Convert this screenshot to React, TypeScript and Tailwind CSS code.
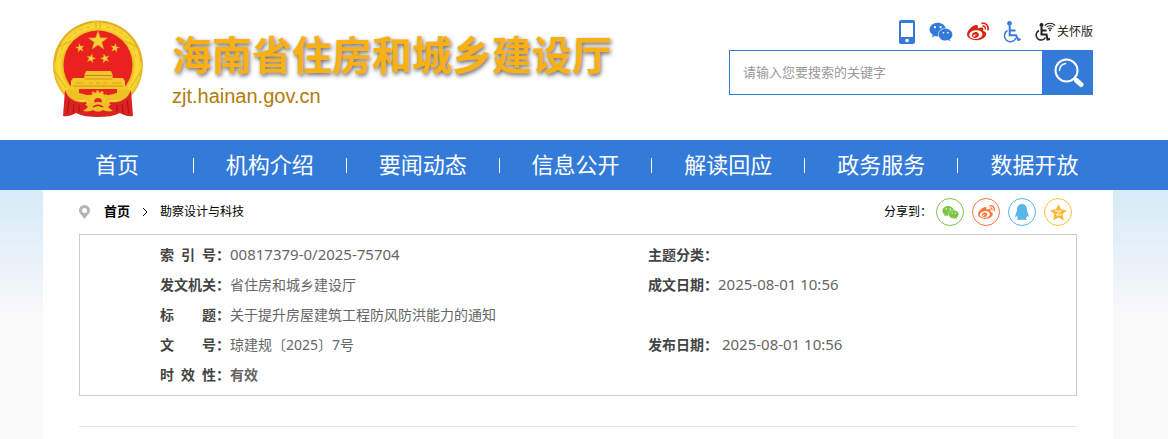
import React from "react";
import { FaWeixin, FaWeibo, FaQq } from "react-icons/fa";

const nav = ["首页", "机构介绍", "要闻动态", "信息公开", "解读回应", "政务服务", "数据开放"];

function Star({ x, y, r, a = 0 }: { x: number; y: number; r: number; a?: number }) {
  return (
    <path
      transform={`translate(${x} ${y}) rotate(${a}) scale(${r})`}
      d="M0-1 .235-.324.951-.309.38.124.588.809 0 .4-.588.809-.38.124-.951-.309-.235-.324Z"
      fill="#f6d03a"
      stroke="#e0901f"
      strokeWidth=".06"
    />
  );
}

function Emblem() {
  return (
    <svg className="h-[98px] w-[92px] shrink-0" viewBox="0 0 92 98" role="img" aria-label="国徽">
      <defs>
        <radialGradient id="gold" cx=".5" cy=".5" r=".5">
          <stop offset=".76" stopColor="#eab41c" />
          <stop offset=".85" stopColor="#fbdc36" />
          <stop offset=".94" stopColor="#f6d030" />
          <stop offset="1" stopColor="#e6b024" />
        </radialGradient>
      </defs>
      <circle cx="46" cy="45.5" r="45" fill="url(#gold)" />
      <path d="M41 2C20 5 5 20 3 42M51 2c21 3 36 18 38 40M7 27l12-6M85 27l-12-6M2 50l12 18M90 50 78 68M44 1v7M48 1v7" stroke="#cf981a" fill="none" opacity=".7" />
      <path d="M38 7C22 10 10 22 8 38M54 7c16 3 28 15 30 31" stroke="#cf981a" fill="none" strokeDasharray="4 3" opacity=".5" />
      <circle cx="46" cy="45" r="34.5" fill="#ea221f" />
      <Star x={46} y={21} r={10} />
      <Star x={28} y={28} r={4.6} a={-10} />
      <Star x={63} y={28} r={4.6} a={10} />
      <Star x={39} y={38.5} r={4.8} a={15} />
      <Star x={53} y={38.5} r={4.8} a={-15} />
      <path d="M34 51h25l2 5-1 3H33l-1-3Z" fill="#f4c52a" />
      <path d="M32 55.5h29" stroke="#c4881a" />
      <path d="M21 58h50l2 3v5l5 4H14l5-4v-5Z" fill="#f4c829" />
      <path d="M33 59h27M21 66h50" stroke="#d1981f" />
      <path d="M24 63h8M37 63h4M44 63h4M51 63h4M60 63h9" stroke="#dca623" />
      <path d="M14 70h64v10H14Z" fill="#efc125" />
      <path d="M27 69h38v4l-8 2H35l-8-2Z" fill="#e6231f" />
      <circle cx="46" cy="81" r="9" fill="#f4c829" stroke="#efbd25" strokeWidth="3" strokeDasharray="2.5 2" />
      <circle cx="46" cy="82" r="4" fill="#de2b1e" />
      <path d="M13 70c3 9 11 13 21 12l3 5h18l3-5c10 1 18-3 21-12l2 26c-5 1-9-1-13-3-6 3-14 4-22 4s-16-1-22-4c-4 2-8 4-13 3Z" fill="#dc2220" />
      <path d="M17 80l-2 14M22 84l-1 10M70 84l1 10M75 80l2 14M27 85v7M65 85v7" stroke="#a41418" />
      <path d="M15 75c6 7 12 8 20 7M77 75c-6 7-12 8-20 7" stroke="#f0605a" fill="none" opacity=".5" />
      <path d="M33 84c5-1 8-2 13-2s8 1 13 2l-3 3 5 4c-5 1-8 0-10-1-3 2-7 2-10 0-2 1-5 2-10 1l5-4Z" fill="#efbd28" />
      <path d="M41 87c3-2 7-2 10 0" stroke="#d51d1b" strokeWidth="1.5" fill="none" />
    </svg>
  );
}

function PhoneIcon() {
  return (
    <svg className="h-6 w-4" viewBox="0 0 16 24" aria-hidden="true">
      <rect width="16" height="24" rx="2" fill="#347bd9" />
      <path d="M2 3h12v14H2Z" fill="#fff" />
      <circle cx="8" cy="20.500" r="1.800" fill="#fff" />
    </svg>
  );
}

function WheelchairIcon() {
  return (
    <svg className="h-[22px] w-[18px]" viewBox="0 0 18 22" fill="none" stroke="#347bd9" aria-hidden="true">
      <circle cx="6.500" cy="2.500" r="2.400" fill="#347bd9" stroke="none" />
      <path d="M6.700 5v9.300h6.300l2.300 4.700 2.200-1M7 9.500h5.500" strokeWidth="2" />
      <path d="M4.500 9.500A6 6 0 1 0 13 17" strokeWidth="1.500" />
    </svg>
  );
}

function CareIcon() {
  return (
    <svg className="h-5 w-[21px]" viewBox="0 0 21 20" fill="none" stroke="#222" aria-hidden="true">
      <circle cx="6.500" cy="3" r="2" fill="#222" stroke="none" />
      <path d="M6.500 5v7.500h5l1 5 2.500-.500M7 8.500h4.500" strokeWidth="2" />
      <path d="M4 8.500a5 5 0 1 0 6.500 7" strokeWidth="1.500" />
      <path d="M9.800 3.500c3-3 7.400-3 10.400 0M11.500 5.200c2-2 5-2 7 0M13.200 6.900c1-1 2.600-1 3.600 0" strokeWidth="1.100" />
      <circle cx="15" cy="8.300" r="1" fill="#222" stroke="none" />
    </svg>
  );
}

function SearchIcon() {
  return (
    <svg className="ml-1 size-[30px]" viewBox="0 0 30 30" fill="none" stroke="#fff" aria-hidden="true">
      <circle cx="12.500" cy="12.500" r="11" strokeWidth="2" />
      <path d="M5.500 12.500a7.500 7.500 0 0 1 6-7" strokeWidth="1.500" strokeLinecap="round" />
      <path d="m20 20 2 2" strokeWidth="3" />
      <path d="m22.500 22.500 4.500 4" strokeWidth="5" strokeLinecap="round" />
    </svg>
  );
}

function Qzone() {
  return (
    <svg className="size-[17px]" viewBox="0 0 18 18" aria-hidden="true">
      <path d="m9 1 2.400 5.200 5.700.700-4.200 3.900 1.100 5.700L9 13.700l-5 2.800 1.100-5.700L.9 6.900l5.700-.7Z" fill="#fdb733" stroke="#fdb733" strokeLinejoin="round" />
      <path d="M5.500 7.500h6L6.500 11.500c2 .4 4 .4 6.500 0" fill="none" stroke="#fff" />
    </svg>
  );
}

function Field({ parts, value, tone = "text" }: { parts: string[]; value?: string; tone?: "text" | "bold" | "number" }) {
  const tones = { text: "", bold: "font-bold", number: "text-[15px]" };
  return (
    <div className="flex h-[30px] items-center whitespace-nowrap">
      <dt className="flex w-[70px] font-bold text-[#444]">
        <span className="flex w-14 justify-between">
          {parts.map((p) => (
            <span key={p}>{p}</span>
          ))}
        </span>
        ：
      </dt>
      <dd className={tones[tone]}>{value}</dd>
    </div>
  );
}

export default function App() {
  return (
    <div className="min-h-screen bg-white font-['Noto_Sans','Noto_Sans_CJK_SC',sans-serif] text-sm text-[#666]">
      <header className="pr-3">
        <div className="mx-auto flex h-[140px] max-w-[1070px] justify-between pr-5 pl-[9px]">
          <div className="flex pt-5">
            <Emblem />
            <div className="ml-7 pt-3">
              <h1 className="text-[40px] leading-[46px] font-bold whitespace-nowrap text-[#f8b016] [text-shadow:1px_2px_4px_#0009]">
                海南省住房和城乡建设厅
              </h1>
              <p className="font-['Liberation_Sans',sans-serif] text-xl leading-9 text-[#b27b0b]">zjt.hainan.gov.cn</p>
            </div>
          </div>
          <div className="w-[364px] pt-[17px]">
            <div className="flex h-[33px] items-center justify-end gap-3.5 pb-1 text-[#347bd9]">
              <a href="#mobile" aria-label="手机版"><PhoneIcon /></a>
              <a href="#wechat" aria-label="微信"><FaWeixin className="size-6" /></a>
              <a href="#weibo" aria-label="微博" className="text-[#dc230d]"><FaWeibo className="size-[22px]" /></a>
              <a href="#accessible" aria-label="无障碍"><WheelchairIcon /></a>
              <a href="#care" className="flex items-center gap-px text-xs leading-5 text-[#222]">
                <CareIcon />
                关怀版
              </a>
            </div>
            <form className="flex h-[45px] border border-[#347bd9]">
              <input aria-label="搜索" placeholder="请输入您要搜索的关键字" className="min-w-0 flex-1 px-[13px] text-[13px] outline-none placeholder:text-[#999]" />
              <button type="button" aria-label="搜索" className="flex w-[50px] items-center justify-center bg-[#347bd9]">
                <SearchIcon />
              </button>
            </form>
          </div>
        </div>
      </header>
      <nav className="bg-[#347bd9] pr-4">
        <ul className="mx-auto grid max-w-[1070px] grid-cols-7">
          {nav.map((n, i) => (
            <li key={n} className="flex h-[50px] items-center">
              <a href="#nav" className="flex-1 text-center text-[22px] text-white">{n}</a>
              {i < nav.length - 1 && <span className="h-[15px] w-px bg-white" />}
            </li>
          ))}
        </ul>
      </nav>
      <main className="bg-linear-to-b from-[#d6eaf8] to-[#f9f9f9] to-[130px] pr-3">
        <div className="mx-auto min-h-[249px] max-w-[1070px] bg-white px-9">
          <div className="flex h-11 items-center justify-between text-xs text-black">
            <div className="flex items-center">
              <svg className="h-[14px] w-[11px]" viewBox="0 0 11 14" aria-hidden="true">
                <path fillRule="evenodd" d="M5.500 0A5.500 5.500 0 0 0 0 5.500C0 8.500 3 10.500 5.500 14 8 10.500 11 8.500 11 5.500A5.500 5.500 0 0 0 5.500 0m0 3a2.500 2.500 0 1 1 0 5 2.500 2.500 0 0 1 0-5" fill="#b5b5b5" />
              </svg>
              <a href="#home" className="ml-3.5 text-[13px] font-bold">首页</a>
              <svg className="mx-3 h-2 w-[6px]" viewBox="0 0 6 8" fill="none" stroke="#000" aria-hidden="true"><path d="m1 0 4 4-4 4" /></svg>
              <a href="#survey">勘察设计与科技</a>
            </div>
            <div className="flex items-center gap-1 pr-[5px]">
              <span>分享到：</span>
              <div className="flex gap-2">
                <a href="#s1" aria-label="微信" className="flex size-7 items-center justify-center rounded-full border border-[#7bc549] text-[#7bc549]"><FaWeixin className="size-[17px]" /></a>
                <a href="#s2" aria-label="微博" className="flex size-7 items-center justify-center rounded-full border border-[#ff763b] text-[#ff763b]"><FaWeibo className="size-[17px]" /></a>
                <a href="#s3" aria-label="QQ" className="flex size-7 items-center justify-center rounded-full border border-[#56b6e7] text-[#56b6e7]"><FaQq className="size-4" /></a>
                <a href="#s4" aria-label="QQ空间" className="flex size-7 items-center justify-center rounded-full border border-[#fdbe3d]"><Qzone /></a>
              </div>
            </div>
          </div>
          <dl className="grid grid-cols-[488px_1fr] border border-[#ccc] py-[5px] pl-20">
            <Field parts={["索", "引", "号"]} value="00817379-0/2025-75704" tone="number" />
            <Field parts={["主题分类"]} />
            <Field parts={["发文机关"]} value="省住房和城乡建设厅" />
            <Field parts={["成文日期"]} value="2025-08-01 10:56" tone="number" />
            <div className="col-span-2"><Field parts={["标", "题"]} value="关于提升房屋建筑工程防风防洪能力的通知" /></div>
            <Field parts={["文", "号"]} value="琼建规〔2025〕7号" />
            <Field parts={["发布日期"]} value={"\u00a02025-08-01 10:56"} tone="number" />
            <div className="col-span-2"><Field parts={["时", "效", "性"]} value="有效" tone="bold" /></div>
          </dl>
          <hr className="mt-[30px] border-[#e5e5e5]" />
        </div>
      </main>
    </div>
  );
}
